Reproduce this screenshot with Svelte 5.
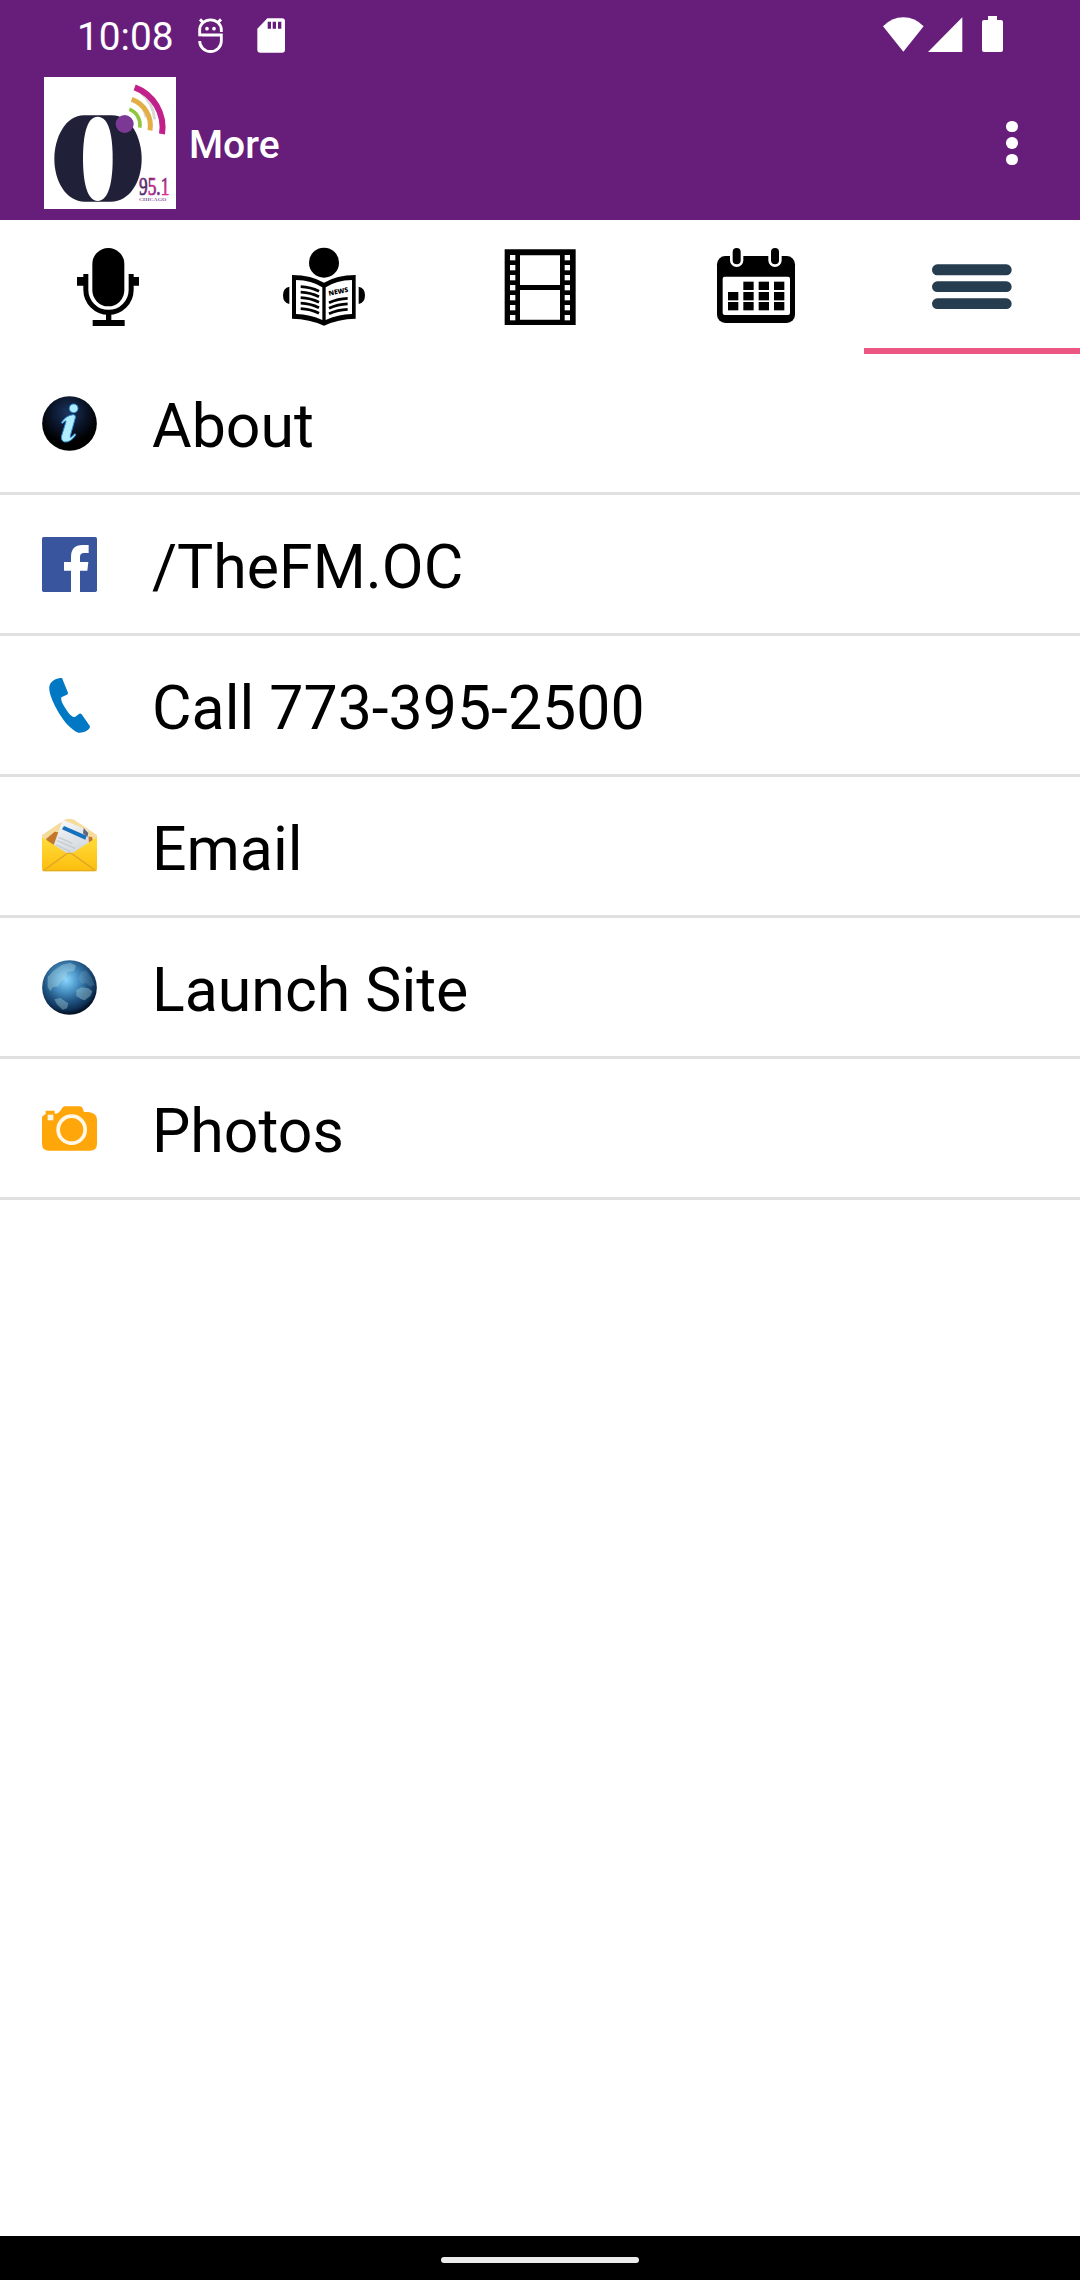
<script lang="ts">
  type Item = { icon: string; label: string };

  const tabs = ['mic', 'news', 'video', 'calendar', 'more'];

  const items: Item[] = [
    { icon: 'info', label: 'About' },
    { icon: 'facebook', label: '/TheFM.OC' },
    { icon: 'phone', label: 'Call 773-395-2500' },
    { icon: 'email', label: 'Email' },
    { icon: 'globe', label: 'Launch Site' },
    { icon: 'camera', label: 'Photos' },
  ];

  let active = $state('more');
</script>

<div class="screen">
  <header>
    <div class="status-bar">
      <span class="time">10:08</span>
      <svg class="face" viewBox="0 0 75 105" width="25" height="35">
        <g fill="none" stroke="#fff" stroke-width="8.5">
          <path d="M5 51V36a32 30 0 0 1 65 0V42M1 51H70V69a32 31 0 0 1-65 0" />
          <path d="M6 4l11 11M69 4L58 15" stroke-width="9" />
        </g>
        <circle cx="27" cy="32" r="5.5" fill="#fff" />
        <circle cx="48" cy="32" r="5.5" fill="#fff" />
        <path d="M0 56H12V67H0z" fill="#671e7b" />
      </svg>
      <svg class="sd" viewBox="0 0 84 105" width="28" height="35">
        <path fill="#fff" fill-rule="evenodd" d="M31 1H75q9 0 9 9V95q0 9-9 9H10q-9 0-9-9V32zM32 11V32H42V11zM47 11V32H57V11zM63 11V32H73V11z" />
      </svg>
      <div class="signals">
        <svg viewBox="0 0 123 106" width="41" height="35.3">
          <path d="M0 28Q26 1 61 1T122 28L61 104z" fill="#fff" />
        </svg>
        <svg viewBox="0 0 103 106" width="34.3" height="35.3">
          <path d="M103 1V105H0z" fill="#fff" />
        </svg>
        <svg class="battery" viewBox="0 0 63 108" width="21" height="36">
          <path d="M18 0H45V12H57q6 0 6 6V102q0 6-6 6H6q-6 0-6-6V18q0-6 6-6H18z" fill="#fff" />
        </svg>
      </div>
    </div>

    <div class="app-bar">
      <svg class="logo" viewBox="0 0 396 396" width="132" height="132">
        <defs>
          <linearGradient id="station" x1="0" x2="1" y1="0" y2="0.3">
            <stop offset="0" stop-color="#c0308f" />
            <stop offset="0.3" stop-color="#3a2a68" />
            <stop offset="0.55" stop-color="#d02c8c" />
            <stop offset="0.75" stop-color="#5a2a78" />
            <stop offset="1" stop-color="#e02c8c" />
          </linearGradient>
        </defs>
        <rect width="396" height="396" fill="#fff" />
        <path d="M120 115H203C262 115 293 184 293 246C293 314 257 374 200 374H122C66 374 31 312 31 246C31 181 65 115 120 115z" fill="#202138" />
        <path d="M161 119C196 119 206 178 206 246C206 314 194 372 161 372C129 372 117 314 117 246C117 178 127 119 161 119z" fill="#fff" />
        <g fill="none">
          <path d="M290 46Q328 78 332 127M283 73Q302 92 306 121" stroke="#d9d9d9" stroke-width="9" />
          <path d="M272 31A128 128 0 0 1 354 171" stroke="#c1208b" stroke-width="18" />
          <path d="M263 67A84 84 0 0 1 318 160" stroke="#e3ae46" stroke-width="15" />
          <path d="M256 97A49 49 0 0 1 287 152" stroke="#8fc63d" stroke-width="11" />
        </g>
        <circle cx="242" cy="141" r="27" fill="#7b3995" />
        <text class="freq" transform="translate(285 355) scale(1 1.4)" fill="url(#station)" stroke="url(#station)">95.1</text>
        <text class="city" transform="translate(285 371) scale(1.12 1)" fill="#8d5aa0">CHICAGO</text>
      </svg>
      <h1>More</h1>
      <button class="overflow" aria-label="More options">
        <i></i><i></i><i></i>
      </button>
    </div>
  </header>

  <nav>
    {#each tabs as tab}
      <button class="tab" class:active={active === tab} aria-label={tab} onclick={() => (active = tab)}>
        <svg viewBox="0 0 246 246" width="82" height="82">
          {#if tab === 'mic'}
            <rect x="76" y="6" width="96" height="175" rx="48" />
            <path d="M56.5 84V131a68 68 0 0 0 136 0V84" fill="none" stroke="#000" stroke-width="15" />
            <path d="M30 93H52V119H30zM197 93H216V119H197zM117 200H133V224H117zM77 222H173V240H77z" />
          {:else if tab === 'news'}
            <circle cx="123" cy="50" r="45" />
            <path fill-rule="evenodd" d="M27 87Q86 88 123 110Q160 88 218 87V218Q165 219 123 239Q80 219 27 218zM39 102V204Q82 206 118 222V124Q86 103 39 102zM207 102Q160 103 128 124V222Q164 206 207 204z" />
            <g fill="none" stroke="#000" stroke-width="8.5">
              {#each [0, 1, 2, 3, 4] as n}
                <path d="M53 {122 + n * 16.5}q30 1 55 14" />
              {/each}
              {#each [0, 1, 2] as n}
                <path d="M138 {170 + n * 16.5}q26-12 56-13" />
              {/each}
            </g>
            <text class="news" transform="translate(138 149) rotate(-11)">NEWS</text>
            <path d="M19 122Q0 126 0 148T19 174zM227 122Q246 126 246 148T227 174z" />
          {:else if tab === 'video'}
            <path d="M17 10H230V237H17z" />
            <path d="M63 28H183V117H63zM63 132H183V221H63z" fill="#fff" />
            {#each [0, 1, 2, 3, 4, 5, 6] as n}
              <rect x="33" y={27 + n * 30} width="16" height="16" fill="#fff" />
              <rect x="197" y={27 + n * 30} width="16" height="16" fill="#fff" />
            {/each}
          {:else if tab === 'calendar'}
            <rect x="6" y="30" width="234" height="201" rx="25" />
            <rect x="23" y="92" width="202" height="115" rx="6" fill="#fff" />
            {#each [65, 180] as x}
              <rect x={x - 20} y="-2" width="40" height="65" rx="20" fill="#fff" />
              <rect x={x - 12} y="6" width="24" height="49" rx="12" />
            {/each}
            {#each [107, 138, 168] as y, row}
              {#each [39, 85, 131, 177] as x, col}
                {#if row > 0 || col > 0}
                  <rect {x} {y} width="31" height="25" />
                {/if}
              {/each}
            {/each}
          {:else}
            <g fill="#263d50">
              <rect x="3" y="55" width="239" height="33" rx="16" />
              <rect x="3" y="106" width="239" height="32" rx="16" />
              <rect x="3" y="157" width="239" height="32" rx="16" />
            </g>
          {/if}
        </svg>
      </button>
    {/each}
  </nav>

  <ul>
    {#each items as item}
      <li>
        <svg viewBox="0 0 165 165" width="55" height="55">
          {#if item.icon === 'info'}
            <defs>
              <radialGradient id="night" cx="0.48" cy="0.3" r="0.55">
                <stop offset="0" stop-color="#1c355f" />
                <stop offset="0.6" stop-color="#0a1428" />
                <stop offset="1" stop-color="#000" />
              </radialGradient>
            </defs>
            <circle cx="82.5" cy="82.5" r="82" fill="url(#night)" />
            <g fill="#b0eeff" stroke="#2c8fd6" stroke-width="3">
              <circle cx="95" cy="37" r="13" />
              <path d="M58 80Q72 58 94 56Q102 57 100 65L85 119Q82 132 98 113L102 116Q87 139 68 138Q56 135 59 119L72 77Q74 70 61 82z" />
            </g>
          {:else if item.icon === 'facebook'}
            <rect width="165" height="165" rx="5" fill="#38559d" />
            <path d="M87 165V101H66V75H87V60Q87 24 121 24H140V48H126Q114 48 114 60V75H139L136 101H114V165z" fill="#fff" />
          {:else if item.icon === 'phone'}
            <path d="M60 0L78 44Q78 49 73 51L58 58C55 67 65 84 73 95C82 108 90 118 99 117L112 107Q116 105 119 109L144 145C144 159 119 166 109 164C84 155 61 124 46 97C30 68 20 41 22 26C25 7 45 0 60 0z" fill="#0078c4" />
          {:else if item.icon === 'email'}
            <defs>
              <linearGradient id="envelope" x1="0" x2="0" y1="0" y2="1">
                <stop offset="0" stop-color="#ffdc3c" />
                <stop offset="1" stop-color="#fdbd0c" />
              </linearGradient>
              <linearGradient id="letter" x1="0.3" x2="0.6" y1="0" y2="1">
                <stop offset="0" stop-color="#f6f7f8" />
                <stop offset="1" stop-color="#ccd3d9" />
              </linearGradient>
            </defs>
            <path d="M0 48L68 2Q82-4 96 2L165 48V90H0z" fill="#f5dc9c" />
            <path d="M12 60L38 38L150 54L153 66L140 90L24 80z" fill="#c3772a" />
            <path d="M62 2L138 34L142 85L76 118L34 82z" fill="url(#letter)" />
            <path d="M66 21L134 50L130 62L60 31z" fill="#1770bd" />
            <path d="M125 27L139 42L136 54L123 43z" fill="#626978" />
            <path d="M50 55L91 73M45 65L100 88M41 77L85 98" fill="none" stroke="#c5cbd0" stroke-width="4" />
            <path d="M0 55L69 99Q82 108 96 99L165 55V150Q165 157 158 157H7Q0 157 0 150z" fill="url(#envelope)" />
            <path d="M7 153L70 107Q82 98 94 107L158 153" fill="none" stroke="#dba42a" stroke-width="4" />
            <path d="M2 155H163" stroke="#dda92b" stroke-width="3" />
          {:else if item.icon === 'globe'}
            <defs>
              <radialGradient id="ocean" cx="0.44" cy="0.36" r="0.62">
                <stop offset="0" stop-color="#8ad6ff" />
                <stop offset="0.35" stop-color="#4a93c5" />
                <stop offset="0.65" stop-color="#215684" />
                <stop offset="0.88" stop-color="#0e3157" />
                <stop offset="1" stop-color="#051327" />
              </radialGradient>
            </defs>
            <circle cx="82.5" cy="82.5" r="82" fill="url(#ocean)" />
            <g fill="#b4dce5" opacity="0.38">
              <path d="M17 51L35 32L59 15L85 8L102 17L96 33L76 36L72 54L58 62L49 79L32 82L25 94L17 81z" />
              <path d="M37 118L55 114L79 130L75 145L62 149L44 132z" />
              <path d="M103 90L119 82L139 85L151 94L145 108L133 117L128 121L118 118L103 108z" />
              <path d="M117 36L132 31L149 53L158 76L145 80L131 68L119 72L110 56z" opacity="0.4" />
            </g>
          {:else}
            <path d="M0 47Q6 42 11 39V29H38V38Q49 39 55 29L61 20Q64 16 70 16H113Q120 16 122 22L126 33H140Q165 36 165 57V128Q165 149 144 149H21Q0 149 0 128z" fill="#ffa60b" />
            <rect x="17" y="41" width="17" height="17" fill="#fff8e8" />
            <circle cx="89" cy="86" r="40.5" fill="none" stroke="#fff8e8" stroke-width="11" />
          {/if}
        </svg>
        <span>{item.label}</span>
      </li>
    {/each}
  </ul>

  <footer><div class="handle"></div></footer>
</div>

<style>
  :global(body) {
    margin: 0;
    background: #fff;
  }

  .screen {
    width: 1080px;
    height: 2280px;
    display: flex;
    flex-direction: column;
    overflow: hidden;
    font-family: Roboto, sans-serif;
    color: #000;
  }

  svg {
    display: block;
    flex: none;
    overflow: visible;
  }

  button {
    border: 0;
    padding: 0;
    background: none;
  }

  header {
    height: 220px;
    background: #671e7b;
    color: #fff;
  }

  .status-bar {
    height: 66px;
    box-sizing: border-box;
    padding: 16px 77px 0;
    display: flex;
    align-items: flex-start;
  }

  .time {
    width: 121px;
    font-size: 38.8px;
    line-height: 41px;
  }

  .face {
    margin-top: 2px;
  }

  .sd {
    margin: 2px 0 0 34px;
  }

  .signals {
    display: flex;
    gap: 4px;
    margin-left: auto;
    padding-top: 1px;
  }

  .battery {
    margin: -1px 0 0 16px;
  }

  .app-bar {
    height: 154px;
    box-sizing: border-box;
    padding: 0 56px 0 44px;
    display: flex;
    align-items: center;
  }

  .freq {
    font: 52px 'Liberation Serif', serif;
    stroke-width: 1.5px;
  }

  .city {
    font: bold 15px 'Liberation Serif', serif;
  }

  .news {
    font: 800 20px 'Open Sans', sans-serif;
  }

  h1 {
    margin: 4px 0 0 13px;
    font-size: 39px;
    font-weight: 500;
    line-height: 46px;
  }

  .overflow {
    display: flex;
    flex-direction: column;
    gap: 5px;
    margin-left: auto;
    width: 24px;
  }

  .overflow i {
    width: 11.5px;
    height: 11.5px;
    margin-left: 6px;
    border-radius: 50%;
    background: #fff;
  }

  nav {
    display: grid;
    grid-template-columns: repeat(5, 1fr);
    height: 134px;
  }

  .tab {
    display: flex;
    justify-content: center;
    align-items: flex-start;
    padding-top: 26px;
    border-bottom: 6px solid transparent;
  }

  .tab.active {
    border-color: #ec5682;
  }

  ul {
    flex: 1;
    margin: 0;
    padding: 0;
    list-style: none;
  }

  li {
    display: flex;
    align-items: center;
    gap: 55px;
    height: 138px;
    padding-left: 42px;
    border-bottom: 3px solid #e0e0e0;
  }

  li span {
    font-size: 60.8px;
    line-height: 72px;
    padding-top: 7px;
  }

  footer {
    height: 44px;
    display: flex;
    justify-content: center;
    align-items: center;
    background: #000;
  }

  .handle {
    width: 198px;
    height: 6px;
    margin-top: 4px;
    border-radius: 3px;
    background: #ececec;
  }
</style>
